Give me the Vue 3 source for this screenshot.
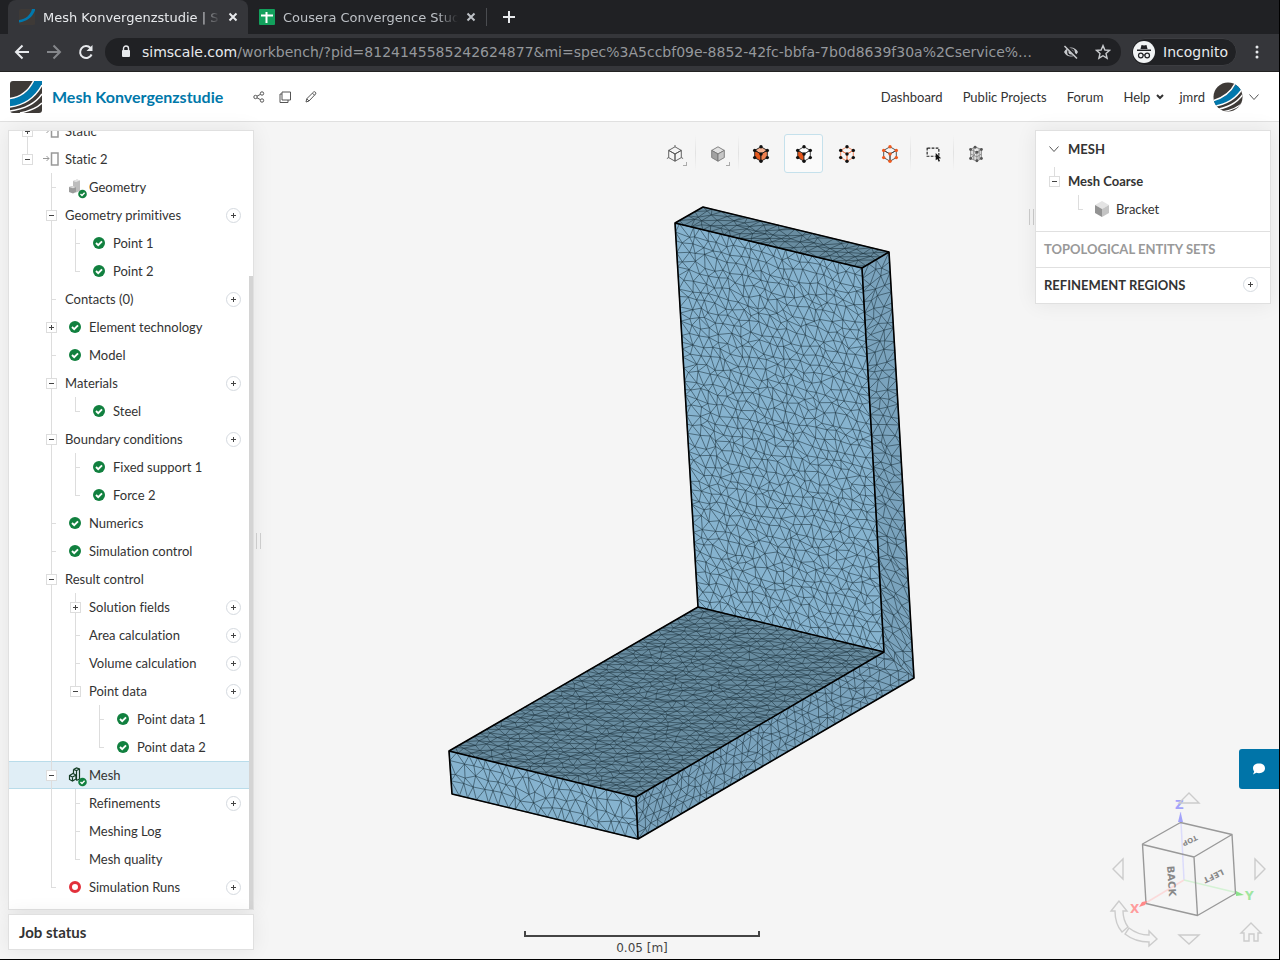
<script setup>
import { ref, computed } from 'vue';

const selected = ref('Mesh');
const tool = ref('faces');

// level: depth in the tree, box: expander sign, icon: status icon, add: has a plus button
const items = [
  { label: 'Static', level: 0, box: '+', icon: 'static' },
  { label: 'Static 2', level: 0, box: '-', icon: 'static' },
  { label: 'Geometry', level: 1, icon: 'geometry' },
  { label: 'Geometry primitives', level: 1, box: '-', add: true },
  { label: 'Point 1', level: 2, icon: 'ok' },
  { label: 'Point 2', level: 2, icon: 'ok' },
  { label: 'Contacts (0)', level: 1, add: true },
  { label: 'Element technology', level: 1, box: '+', icon: 'ok' },
  { label: 'Model', level: 1, icon: 'ok' },
  { label: 'Materials', level: 1, box: '-', add: true },
  { label: 'Steel', level: 2, icon: 'ok' },
  { label: 'Boundary conditions', level: 1, box: '-', add: true },
  { label: 'Fixed support 1', level: 2, icon: 'ok' },
  { label: 'Force 2', level: 2, icon: 'ok' },
  { label: 'Numerics', level: 1, icon: 'ok' },
  { label: 'Simulation control', level: 1, icon: 'ok' },
  { label: 'Result control', level: 1, box: '-' },
  { label: 'Solution fields', level: 2, box: '+', add: true },
  { label: 'Area calculation', level: 2, add: true },
  { label: 'Volume calculation', level: 2, add: true },
  { label: 'Point data', level: 2, box: '-', add: true },
  { label: 'Point data 1', level: 3, icon: 'ok' },
  { label: 'Point data 2', level: 3, icon: 'ok' },
  { label: 'Mesh', level: 1, box: '-', icon: 'mesh' },
  { label: 'Refinements', level: 2, add: true },
  { label: 'Meshing Log', level: 2 },
  { label: 'Mesh quality', level: 2 },
  { label: 'Simulation Runs', level: 1, icon: 'run', add: true }
];

// does another row of this level follow before the branch closes?
function continues(index, level) {
  for (let i = index + 1; i < items.length; i++) {
    if (items[i].level === level) return true;
    if (items[i].level < level) return false;
  }
  return false;
}

const rows = computed(() =>
  items.map((item, index) => {
    const guides = [];
    for (let l = 0; l < item.level; l++) {
      guides.push(continues(index, l) ? 'line' : '');
    }
    guides.push(continues(index, item.level) ? 'branch' : 'last');
    return { ...item, guides };
  })
);

const tools = [
  { id: 'wire', title: 'Projection', more: true },
  { id: 'solid', title: 'Render mode', more: true, split: true },
  { id: 'volumes', title: 'Select volumes', split: true },
  { id: 'faces', title: 'Select faces' },
  { id: 'edges', title: 'Select edges' },
  { id: 'nodes', title: 'Select nodes' },
  { id: 'box', title: 'Box selection', split: true },
  { id: 'clip', title: 'Mesh clip', split: true }
];

const cubeColors = {
  wire: { top: 'none', left: 'none', right: 'none', line: '#555', dot: '' },
  solid: { top: '#e2e2e2', left: '#a2a2a2', right: '#c6c6c6', line: '#777', dot: '' },
  volumes: { top: '#f6b292', left: '#e5571c', right: '#f08150', line: '#1a1a1a', dot: '#111' },
  faces: { top: '#fff', left: '#e5571c', right: '#fff', line: '#333', dot: '#111' },
  edges: { top: 'none', left: 'none', right: 'none', line: '#ef7d4f', dot: '#111' },
  nodes: { top: 'none', left: 'none', right: 'none', line: '#444', dot: '#f05a1e' }
};
const dots = [[10, 2], [17, 6], [17, 14], [10, 18], [3, 14], [3, 6], [10, 10]];

let seed = 7;
function random() {
  seed = (seed * 16807) % 2147483647;
  return seed / 2147483647;
}

function circumcircle(p, a, b, c) {
  const [ax, ay] = p[a];
  const bx = p[b][0] - ax;
  const by = p[b][1] - ay;
  const cx = p[c][0] - ax;
  const cy = p[c][1] - ay;
  const d = 2 * (bx * cy - by * cx) || 1e-9;
  const b2 = bx * bx + by * by;
  const c2 = cx * cx + cy * cy;
  const x = (cy * b2 - by * c2) / d;
  const y = (bx * c2 - cx * b2) / d;
  return { v: [a, b, c], x: x + ax, y: y + ay, r: x * x + y * y };
}

// Delaunay triangulation (Bowyer-Watson), returns unique edges
function triangulate(points) {
  const n = points.length;
  const p = [...points, [-900, -900], [1100, -900], [0, 1500]];
  let tris = [circumcircle(p, n, n + 1, n + 2)];
  for (let i = 0; i < n; i++) {
    const edges = new Map();
    const keep = [];
    for (const t of tris) {
      const dx = p[i][0] - t.x;
      const dy = p[i][1] - t.y;
      if (dx * dx + dy * dy >= t.r) {
        keep.push(t);
        continue;
      }
      for (let k = 0; k < 3; k++) {
        const a = Math.min(t.v[k], t.v[(k + 1) % 3]);
        const b = Math.max(t.v[k], t.v[(k + 1) % 3]);
        const key = a + '_' + b;
        if (edges.has(key)) edges.delete(key);
        else edges.set(key, [a, b]);
      }
    }
    tris = keep;
    for (const [a, b] of edges.values()) tris.push(circumcircle(p, a, b, i));
  }
  const result = new Map();
  for (const { v } of tris) {
    if (Math.max(...v) >= n) continue;
    for (let k = 0; k < 3; k++) {
      const a = Math.min(v[k], v[(k + 1) % 3]);
      const b = Math.max(v[k], v[(k + 1) % 3]);
      result.set(a + '_' + b, [a, b]);
    }
  }
  return [...result.values()];
}

// quad corners in order, divided in cols x rows elements
function meshPath([a, b, c, d], cols, rows) {
  const points = [];
  for (let j = 0; j <= rows; j++) {
    for (let i = 0; i <= cols; i++) {
      const edgeX = i === 0 || i === cols;
      const edgeY = j === 0 || j === rows;
      const shift = j % 2 ? 0.25 : -0.25;
      const x = edgeX ? i : i + shift + (random() - 0.5) * 0.56;
      const y = edgeY ? j : j + (random() - 0.5) * 0.64;
      points.push([x, y]);
    }
  }
  const screen = points.map(([x, y]) => {
    const u = x / cols;
    const v = y / rows;
    return [0, 1]
      .map((k) => (a[k] * (1 - u) + b[k] * u) * (1 - v) + (d[k] * (1 - u) + c[k] * u) * v)
      .map((n) => n.toFixed(1))
      .join(' ');
  });
  return triangulate(points).map(([s, e]) => `M${screen[s]}L${screen[e]}`).join('');
}

const faces = [
  { fill: '#86b3cf', quad: [[675, 223], [862, 268], [884, 652], [698, 607]], n: [20, 42] },
  { fill: '#688ca0', quad: [[675, 223], [703, 207], [889, 252], [862, 268]], n: [4, 20] },
  { fill: '#7aa3bd', quad: [[862, 268], [889, 252], [914, 678], [884, 652]], n: [3, 44] },
  { fill: '#7aa3bd', quad: [[636, 797], [884, 652], [914, 678], [638, 839]], n: [34, 5] },
  { fill: '#688ca0', quad: [[449, 751], [698, 607], [884, 652], [636, 797]], n: [38, 20] },
  { fill: '#86b3cf', quad: [[449, 751], [636, 797], [638, 839], [452, 794]], n: [19, 4] }
].map((f) => ({ fill: f.fill, points: f.quad.join(' '), path: meshPath(f.quad, ...f.n) }));
</script>

<template>
  <div class="window">
    <header class="browser">
      <div class="tabs">
        <div class="tab active">
          <svg class="favicon" viewBox="0 0 32 32">
            <rect width="32" height="32" rx="3" fill="#3e3a37" />
            <path d="M0 22C14 20 23 12 26 0h6v3C27 16 16 25 0 27z" fill="#0078ad" />
          </svg>
          <span class="tab-title">Mesh Konvergenzstudie | SimScale</span>
          <button class="tab-btn" aria-label="Close tab">
            <svg viewBox="0 0 10 10"><path d="M1.500 1.500l7 7M8.500 1.500l-7 7" /></svg>
          </button>
        </div>
        <div class="tab">
          <svg class="favicon" viewBox="0 0 16 16">
            <rect width="16" height="16" rx="1" fill="#12a05c" />
            <path d="M2 6.500h12M7.500 3v11" stroke="#fff" stroke-width="2" />
          </svg>
          <span class="tab-title">Cousera Convergence Study</span>
          <button class="tab-btn" aria-label="Close tab">
            <svg viewBox="0 0 10 10"><path d="M1.500 1.500l7 7M8.500 1.500l-7 7" /></svg>
          </button>
        </div>
        <button class="new-tab" aria-label="New tab">
          <svg viewBox="0 0 12 12"><path d="M6 0v12M0 6h12" /></svg>
        </button>
      </div>
      <div class="toolbar">
        <button class="nav-btn" aria-label="Back">
          <svg viewBox="0 0 16 16"><path d="M15 8H2M8.500 1.500L2 8l6.500 6.500" /></svg>
        </button>
        <button class="nav-btn dim" aria-label="Forward">
          <svg viewBox="0 0 16 16"><path d="M1 8h13M7.500 1.500L14 8l-6.500 6.500" /></svg>
        </button>
        <button class="nav-btn" aria-label="Reload">
          <svg viewBox="0 0 16 16">
            <path d="M13.600 10.500A6 6 0 1 1 12.500 4" />
            <path d="M14.500 1v6h-6z" fill="#e8eaed" stroke="none" />
          </svg>
        </button>
        <div class="address">
          <svg class="lock" viewBox="0 0 10 13">
            <rect x="1" y="5" width="8" height="7" rx="1" fill="#e8eaed" />
            <path d="M2.500 6V3.500a2.500 2.500 0 0 1 5 0V6" fill="none" stroke="#e8eaed" stroke-width="1.400" />
          </svg>
          <span class="url"><b>simscale.com</b>/workbench/?pid=8124145585242624877&amp;mi=spec%3A5ccbf09e-8852-42fc-bbfa-7b0d8639f30a%2Cservice%…</span>
          <button class="address-btn" aria-label="Cookies blocked">
            <svg viewBox="0 0 16 16">
              <path d="M1 8c3-6 11-6 14 0-3 6-11 6-14 0z" fill="#c8cacd" />
              <circle cx="8" cy="8" r="3.200" fill="#c8cacd" stroke="#202124" stroke-width="1.300" />
              <path d="M2 1l13 13" stroke="#202124" stroke-width="3" />
              <path d="M1.500 2l12.500 12.500" stroke="#c8cacd" stroke-width="1.500" />
            </svg>
          </button>
          <button class="address-btn" aria-label="Bookmark">
            <svg viewBox="0 0 16 16">
              <path d="M8 1.600l1.900 4.400 4.700.4-3.600 3.100 1.100 4.700L8 11.700l-4.100 2.500L5 9.500 1.400 6.400l4.700-.4z" fill="none" stroke="#c8cacd" stroke-width="1.400" />
            </svg>
          </button>
        </div>
        <div class="incognito">
          <svg viewBox="0 0 22 22">
            <circle cx="11" cy="11" r="11" fill="#f1f3f4" />
            <path d="M7.500 8l1-4 2.500.6 2.500-.6 1 4zM4 8.500h14v1.500H4z" fill="#202124" />
            <g fill="none" stroke="#202124" stroke-width="1.200">
              <circle cx="7.800" cy="14.500" r="2.300" />
              <circle cx="14.200" cy="14.500" r="2.300" />
              <path d="M10 14h2" />
            </g>
          </svg>
          Incognito
        </div>
        <button class="kebab" aria-label="Menu">
          <svg viewBox="0 0 4 16">
            <circle cx="2" cy="3" r="1.500" /><circle cx="2" cy="8" r="1.500" /><circle cx="2" cy="13" r="1.500" />
          </svg>
        </button>
      </div>
    </header>

    <div class="app-header">
      <svg class="logo" viewBox="0 0 32 32">
        <rect width="32" height="32" rx="3" fill="#3e3a37" />
        <path d="M0 18C12 16 20 9 24 0h8v3C26 16 15 24 0 26z" fill="#0078ad" />
        <path d="M0 17.500C11 16 19 9 23.500 0M0 26C15 24 26 15 32 4M0 30c15-2 26-8 32-17M10 32c10-2 17-5 22-10" fill="none" stroke="#fff" stroke-width="1.500" />
      </svg>
      <h1>Mesh Konvergenzstudie</h1>
      <div class="title-actions">
        <button aria-label="Share">
          <svg viewBox="0 0 12 12"><circle cx="2.500" cy="6" r="1.700" /><circle cx="9" cy="2.500" r="1.700" /><circle cx="9" cy="9.500" r="1.700" /><path d="M4 5.200l3.500-1.900M4 6.800l3.500 1.900" /></svg>
        </button>
        <button aria-label="Copy">
          <svg viewBox="0 0 12 12"><path d="M3 1h8.500v8H3zM3 3H1v8.500h8V9" /></svg>
        </button>
        <button aria-label="Edit">
          <svg viewBox="0 0 12 12"><path d="M1 11l.8-3.300L8.600 1q.9-.7 1.800.2t.2 1.800L4 10zM7.500 2.200l2 2M1.800 7.700L4 10" /></svg>
        </button>
      </div>
      <nav>
        <a href="#">Dashboard</a>
        <a href="#">Public Projects</a>
        <a href="#">Forum</a>
        <a href="#" class="help">Help
          <svg viewBox="0 0 8 6"><path d="M1 1l3 3 3-3" /></svg>
        </a>
      </nav>
      <button class="user">
        <span>jmrd</span>
        <svg class="avatar" viewBox="0 0 32 32">
          <clipPath id="round"><circle cx="16" cy="16" r="15.500" /></clipPath>
          <g clip-path="url(#round)">
            <rect width="32" height="32" fill="#3e3a37" />
            <path d="M0 20C12 17 20 11 24 2h8v3C26 17 15 23 0 27z" fill="#0078ad" />
            <path d="M0 20C11 17 19 11 24 1M0 26C15 24 26 16 32 6M0 30c15-2 26-8 32-17M10 32c10-2 17-5 22-10" fill="none" stroke="#fff" stroke-width="1.500" />
          </g>
        </svg>
        <svg class="caret" viewBox="0 0 10 6"><path d="M.5.5L5 5.500 9.500.5" /></svg>
      </button>
    </div>

    <main>
      <aside class="sidebar">
        <div class="tree-panel">
          <ul class="tree">
            <li v-for="row in rows" :key="row.label" :class="['row', { selected: selected === row.label }]" @click="selected = row.label">
              <span v-for="(g, i) in row.guides" :key="i" :class="['guide', g]">
                <button v-if="row.box && i === row.level" class="expander" :aria-label="'Toggle ' + row.label">
                  <svg viewBox="0 0 11 11"><path :d="row.box === '+' ? 'M3 5.500h5M5.500 3v5' : 'M3 5.500h5'" /></svg>
                </button>
              </span>
              <svg v-if="row.icon" class="icon" viewBox="0 0 20 20">
                <g v-if="row.icon === 'static'" fill="none" stroke="#999">
                  <path d="M2 9.500h6M5.500 7L8 9.500 5.500 12" />
                  <path d="M10.500 4h6.500v12h-6.500z" stroke-width="1.500" />
                </g>
                <g v-if="row.icon === 'geometry'">
                  <path d="M8 4l4-1.500 3 1V14l-4 1.500-3-1z" fill="#bdbdbd" />
                  <path d="M8 4l4-1.500 3 1L11 5z" fill="#e4e4e4" />
                  <path d="M4 10l4-1 3 1v5l-3 1.500-4-1.500z" fill="#9b9b9b" />
                  <path d="M4 10l4-1 3 1-3 1.200z" fill="#dcdcdc" />
                </g>
                <g v-if="row.icon === 'mesh'" fill="none" stroke="#143d25" stroke-width="1.200">
                  <path d="M8.500 4.500l3-1.500 3 1v10l-3 1.500M8.500 4.500l3 1 3-1.500M11.500 5.500v10M8.500 4.500v4" />
                  <path d="M4.500 10.500l3.500-2 3 1.500v4l-3.500 2-3-1.500zM4.500 10.500l3 1.500 3.500-2M7.500 12v4" />
                </g>
                <g v-if="row.icon === 'ok'">
                  <circle cx="10" cy="10" r="6" fill="#11803f" />
                  <path d="M7 10l2.200 2.200L13 8.300" fill="none" stroke="#fff" stroke-width="1.900" />
                </g>
                <g v-if="row.icon === 'geometry' || row.icon === 'mesh'">
                  <circle cx="17.500" cy="17" r="4.300" fill="#11803f" />
                  <path d="M15.500 17l1.500 1.500 2.600-2.700" fill="none" stroke="#fff" stroke-width="1.400" />
                </g>
                <circle v-if="row.icon === 'run'" cx="10" cy="10" r="4.500" fill="none" stroke="#e2303b" stroke-width="3" />
              </svg>
              <span class="label">{{ row.label }}</span>
              <button v-if="row.add" class="add" :aria-label="'Add to ' + row.label">
                <svg viewBox="0 0 15 15"><path d="M5 7.500h5M7.500 5v5" /></svg>
              </button>
            </li>
          </ul>
          <div class="scrollbar"><div class="thumb"></div></div>
        </div>
        <div class="job-status">Job status</div>
      </aside>
      <div class="handle"></div>

      <section class="viewer">
        <div class="view-tools">
          <button
            v-for="t in tools"
            :key="t.id"
            :class="['tool', { active: tool === t.id, split: t.split }]"
            :title="t.title"
            @click="tool = t.id"
          >
            <svg v-if="cubeColors[t.id]" viewBox="0 0 20 20">
              <g :stroke="cubeColors[t.id].line" stroke-linejoin="round">
                <path d="M10 2l7 4-7 4-7-4z" :fill="cubeColors[t.id].top" />
                <path d="M3 6l7 4v8l-7-4z" :fill="cubeColors[t.id].left" />
                <path d="M17 6l-7 4v8l7-4z" :fill="cubeColors[t.id].right" />
                <path v-if="t.id === 'wire'" d="M10 0v2M3 14l-2 1M17 14l2 1" />
              </g>
              <template v-if="cubeColors[t.id].dot">
                <circle v-for="(d, i) in dots" :key="i" :cx="d[0]" :cy="d[1]" r="1.900" :fill="cubeColors[t.id].dot" />
              </template>
            </svg>
            <svg v-else-if="t.id === 'box'" viewBox="0 0 20 20">
              <path d="M4 3.500H16.500V12M3.500 3v9.500H13" fill="none" stroke="#222" stroke-width="1.300" stroke-dasharray="3 1.500" />
              <path d="M13 9v8l2-1.500 1.300 3 1.500-.7-1.400-2.800 2.600-.3z" fill="#111" />
            </svg>
            <svg v-else viewBox="0 0 20 20">
              <path d="M4 5l5-3 7 3v10l-5 3-7-3zM4 5l7 3 5-3M11 8v10M4 10l7 3 5-3M7.500 3.500v13M13.500 4v12M4 15l7-7" fill="#ddd" stroke="#888" />
              <g fill="#555">
                <circle cx="4" cy="5" r="1.600" /><circle cx="9" cy="2.500" r="1.600" /><circle cx="16" cy="5" r="1.600" />
                <circle cx="4" cy="15" r="1.600" /><circle cx="11" cy="17.500" r="1.600" /><circle cx="16" cy="15" r="1.600" /><circle cx="11" cy="8" r="1.600" />
              </g>
            </svg>
            <span v-if="t.more" class="more"></span>
          </button>
        </div>
        <svg class="model" viewBox="264 181 764 745">
          <g v-for="(f, i) in faces" :key="i">
            <polygon :points="f.points" :fill="f.fill" />
            <path :d="f.path" class="mesh-lines" />
          </g>
          <path class="outline" d="M675 223L703 207 889 252 914 678 638 839 452 794 449 751 698 607zM675 223L862 268 889 252M862 268L884 652 698 607M884 652L636 797 449 751M636 797L638 839" />
        </svg>
        <div class="scale">
          <div class="bar"></div>
          <span>0.05 [m]</span>
        </div>
      </section>

      <aside class="right">
        <div class="mesh-row">
          <div class="handle"></div>
          <div class="mesh-panel">
            <div class="mesh-section">
              <button class="section-title">
                <svg viewBox="0 0 10 6"><path d="M.5.5L5 5.500 9.500.5" /></svg>
                MESH
              </button>
              <div class="row">
                <span class="guide last">
                  <button class="expander" aria-label="Toggle Mesh Coarse">
                    <svg viewBox="0 0 11 11"><path d="M3 5.500h5" /></svg>
                  </button>
                </span>
                <span class="label bold">Mesh Coarse</span>
              </div>
              <div class="row">
                <span class="guide"></span>
                <span class="guide last"></span>
                <svg class="icon" viewBox="0 0 20 20">
                  <path d="M10 2l7 4-7 4-7-4z" fill="#e4e4e4" />
                  <path d="M3 6l7 4v8l-7-4z" fill="#939393" />
                  <path d="M17 6l-7 4v8l7-4z" fill="#c4c4c4" />
                </svg>
                <span class="label">Bracket</span>
              </div>
            </div>
            <div class="panel-line muted">TOPOLOGICAL ENTITY SETS</div>
            <div class="panel-line">
              REFINEMENT REGIONS
              <button class="add" aria-label="Add refinement region">
                <svg viewBox="0 0 15 15"><path d="M5 7.500h5M7.500 5v5" /></svg>
              </button>
            </div>
          </div>
        </div>

        <button class="chat" aria-label="Chat">
          <svg viewBox="0 0 14 14"><path d="M7 1.500c3.800 0 6 2 6 4.800s-2.200 4.900-6 4.900c-1 0-2-.2-2.700-.5L1 12.500l1.200-3C1.400 8.600 1 7.500 1 6.300 1 3.500 3.200 1.500 7 1.500z" fill="#fff" /></svg>
        </button>

        <svg class="cube" viewBox="1105 789 165 161">
          <path d="M1184 880L1180.500 812" stroke="#dcdcfb" stroke-width="1.500" />
          <path d="M1184 880l-40 24" stroke="#fbdada" stroke-width="1.500" />
          <path d="M1184 880l54 13" stroke="#d5f2d5" stroke-width="1.500" />
          <g fill="none" stroke="#999" stroke-width="1.400" stroke-linejoin="round">
            <path d="M1180.500 822.500l51.500 12 3.500 59-38 22-51.500-12-3.500-59.500zM1142.500 844.500l51.500 12.500 38-22.500M1194 857l3.500 58.500" />
          </g>
          <path d="M1178 822l2.500-10 2.500 10z" fill="#a3a3fa" />
          <path d="M1139 907l3-5 5-1-2 4z" fill="#f88" />
          <path d="M1244 895l-8-4v5z" fill="#8be28b" />
          <g class="axis">
            <text x="1175" y="809" fill="#a3a3fa">Z</text>
            <text x="1130" y="913" fill="#ff9c9c">X</text>
            <text x="1245" y="900" fill="#a0e6a0">Y</text>
          </g>
          <g class="side">
            <text transform="translate(1167 866) rotate(86)">BACK</text>
            <text class="left" transform="translate(1222 869) rotate(154)">LEFT</text>
            <text class="top" transform="translate(1196 835) rotate(154)">TOP</text>
          </g>
          <g fill="none" stroke="#ccc" stroke-width="1.400">
            <path d="M1179 803h20l-10-10zM1179 935h20l-10 9zM1123 859v20l-10-10zM1255 859v20l10-10z" />
            <path d="M1119 901l-8 10h4q0 13 7 21l6-5q-5-7-5-16h4z" />
            <path d="M1157 939l-8-8v4q-11 0-20-7l-4 6q10 8 24 8v4z" />
            <path d="M1241 933l10-10 10 10h-3v8h-4v-7h-5v7h-5v-8z" />
          </g>
        </svg>
      </aside>
    </main>
  </div>
</template>

<style>
body {
  background: #f5f5f5;
}
</style>

<style scoped>
.window {
  display: flex;
  flex-direction: column;
  box-sizing: border-box;
  height: 100vh;
  border-right: 1px solid #000;
  border-bottom: 1px solid #000;
  background: #f5f5f5;
  color: #333;
  font-family: Lato, "Liberation Sans", sans-serif;
  font-size: 13px;
  font-variant-ligatures: none;
}

button {
  padding: 0;
  border: none;
  background: none;
  color: inherit;
  font: inherit;
  cursor: pointer;
}

svg {
  display: block;
  flex: none;
}

/* Browser bar */
.browser {
  font-family: "DejaVu Sans", sans-serif;
  color: #e8eaed;
  background: #202124;
}

.tabs {
  display: flex;
  height: 34px;
  padding-left: 8px;
}

.tab {
  display: flex;
  align-items: center;
  box-sizing: border-box;
  width: 238px;
  padding: 0 10px 0 11px;
  color: #bdc1c6;
}

.tab.active {
  width: 240px;
  border-radius: 8px 8px 0 0;
  background: #35363a;
  color: #e8eaed;
}

.favicon {
  width: 16px;
  height: 16px;
  margin-right: 8px;
}

.tab-title {
  flex: 1;
  min-width: 0;
  overflow: hidden;
  white-space: nowrap;
  font-size: 13px;
  mask-image: linear-gradient(to right, #000 88%, transparent);
}

.tab-btn svg {
  width: 10px;
  height: 10px;
  margin-left: 8px;
  stroke: currentColor;
  stroke-width: 2;
}

.new-tab {
  display: flex;
  align-items: center;
  height: 18px;
  margin-top: 8px;
  padding-left: 16px;
  border-left: 1px solid #4a4c50;
}

.new-tab svg {
  width: 12px;
  height: 12px;
  stroke: #e8eaed;
  stroke-width: 2;
}

.toolbar {
  display: flex;
  align-items: center;
  height: 38px;
  box-sizing: border-box;
  padding: 0 20px 2px 14px;
  border-bottom: 1px solid #222;
  background: #35363a;
}

.nav-btn {
  margin-right: 16px;
}

.nav-btn svg {
  width: 16px;
  height: 16px;
  fill: none;
  stroke: #e8eaed;
  stroke-width: 2;
}

.nav-btn.dim svg {
  stroke: #85878b;
}

.address {
  display: flex;
  flex: 1;
  align-items: center;
  min-width: 0;
  height: 28px;
  margin-left: -5px;
  padding: 0 10px 0 16px;
  border-radius: 14px;
  background: #202124;
}

.lock {
  width: 10px;
  height: 13px;
  margin-right: 11px;
}

.url {
  flex: 1;
  min-width: 0;
  overflow: hidden;
  white-space: nowrap;
  color: #95989c;
  font-size: 14px;
}

.url b {
  color: #e8eaed;
  font-weight: normal;
}

.address-btn {
  margin-left: 16px;
}

.address-btn svg {
  width: 16px;
  height: 16px;
}

.incognito {
  display: flex;
  align-items: center;
  gap: 8px;
  height: 26px;
  margin: 0 18px 0 10px;
  padding: 0 8px 0 1px;
  border: 1px solid #3c3d41;
  border-radius: 14px;
  background: #202124;
  font-size: 14px;
}

.incognito svg {
  width: 22px;
  height: 22px;
}

.kebab svg {
  width: 4px;
  height: 16px;
  fill: #e8eaed;
}

/* Application header */
.app-header {
  display: flex;
  align-items: center;
  height: 49px;
  padding: 0 20px 0 10px;
  border-bottom: 1px solid #e0e0e0;
  background: #fff;
}

.logo {
  width: 32px;
  height: 32px;
}

h1 {
  margin: 0 30px 0 10px;
  color: #0078aa;
  font-size: 16px;
  line-height: 20px;
}

.title-actions {
  display: flex;
  gap: 14px;
}

.title-actions svg {
  width: 12px;
  height: 12px;
  fill: none;
  stroke: #555;
}

nav {
  display: flex;
  gap: 20px;
  margin-left: auto;
}

nav a {
  color: #333;
  text-decoration: none;
}

.help {
  display: flex;
  align-items: center;
  gap: 6px;
}

.help svg {
  width: 8px;
  height: 6px;
  fill: none;
  stroke: #333;
  stroke-width: 2;
}

.user {
  display: flex;
  align-items: center;
  margin-left: 15px;
}

.avatar {
  width: 30px;
  height: 30px;
  margin: 0 6px 0 8px;
}

.caret,
.section-title svg {
  width: 10px;
  height: 6px;
  fill: none;
  stroke: #555;
}

/* Main area */
main {
  display: flex;
  flex: 1;
  min-height: 0;
}

.sidebar {
  display: flex;
  flex-direction: column;
  gap: 4px;
  width: 246px;
  padding: 8px 0 9px 8px;
}

.tree-panel,
.job-status,
.mesh-panel {
  box-sizing: border-box;
  border: 1px solid #e0e0e0;
  background: #fff;
  box-shadow: 0 0 20px rgba(0, 0, 0, 0.07);
}

.tree-panel {
  display: flex;
  flex: 1;
  min-height: 0;
  overflow: hidden;
}

/* scrolled to the end */
.tree {
  display: flex;
  flex: 1;
  flex-direction: column;
  justify-content: flex-end;
  margin: 0;
  padding: 0 0 8px;
  list-style: none;
}

.row {
  display: flex;
  flex: none;
  align-items: center;
  box-sizing: border-box;
  height: 28px;
  padding: 0 8px 0 6px;
}

.row.selected {
  background: #e0eef6;
  box-shadow: inset 0 1px #b9dcea, inset 0 -1px #b9dcea;
}

.guide {
  display: flex;
  align-items: center;
  justify-content: center;
  width: 24px;
  height: 28px;
  background-repeat: no-repeat;
}

.guide.line {
  background-image: linear-gradient(#ddd, #ddd);
  background-position: 12px 0;
  background-size: 1px 100%;
}

.guide.branch,
.guide.last {
  background-image: linear-gradient(#ddd, #ddd), linear-gradient(#ddd, #ddd);
  background-position: 12px 0, 12px 14px;
  background-size: 1px 100%, 5px 1px;
}

.guide.last {
  background-size: 1px 14px, 5px 1px;
}

.expander svg {
  box-sizing: border-box;
  width: 11px;
  height: 11px;
  background: #fff;
  outline: 1px solid #ddd;
  outline-offset: -1px;
  stroke: #444;
}

.icon {
  width: 20px;
  height: 20px;
  margin: 0 2px;
  overflow: visible;
}

.label {
  flex: 1;
  padding-left: 2px;
  line-height: 20px;
}

.label.bold {
  font-weight: bold;
}

.add svg {
  width: 15px;
  height: 15px;
  box-sizing: border-box;
  border-radius: 50%;
  outline: 1px solid #d5dae0;
  outline-offset: -1px;
  stroke: #444;
}

.scrollbar {
  display: flex;
  flex-direction: column;
  width: 4px;
  padding-top: 145px;
}

.thumb {
  flex: 1;
  background: #d4d4d4;
}

.job-status {
  height: 36px;
  padding-left: 10px;
  font-size: 15px;
  font-weight: bold;
  line-height: 34px;
}

.handle {
  align-self: center;
  box-sizing: border-box;
  width: 5px;
  height: 16px;
  margin: 0 3px 0 2px;
  border: solid #ccc;
  border-width: 0 1px;
}

/* 3D viewer */
.viewer {
  display: flex;
  flex: 1;
  flex-direction: column;
  min-width: 0;
}

.view-tools {
  display: flex;
  justify-content: flex-end;
  gap: 4px;
  padding: 12px 33px 8px 0;
}

.tool {
  position: relative;
  display: flex;
  align-items: center;
  justify-content: center;
  box-sizing: border-box;
  width: 39px;
  height: 39px;
  border: 1px solid transparent;
  border-radius: 3px;
}

.tool.active {
  border-color: #c5e1ec;
  background: #fafafa;
}

.tool svg {
  width: 18px;
  height: 18px;
}

.tool.split::before {
  content: "";
  position: absolute;
  top: 0;
  left: -4px;
  width: 1px;
  height: 36px;
  background: linear-gradient(transparent, #e2e2e2, transparent);
}

.more {
  position: absolute;
  right: 6px;
  bottom: 6px;
  width: 3px;
  height: 3px;
  border: solid #aaa;
  border-width: 0 1px 1px 0;
}

.model {
  flex: 1;
  width: 100%;
  min-height: 0;
}

.mesh-lines {
  fill: none;
  stroke: #1c303c;
  stroke-opacity: 0.62;
  stroke-width: 0.9;
}

.outline {
  fill: none;
  stroke: #000;
  stroke-width: 1.6;
  stroke-linejoin: round;
}

.scale {
  display: flex;
  flex-direction: column;
  align-items: center;
  padding: 5px 8px 0 0;
  color: #444;
  font: 12px/22px "DejaVu Sans", sans-serif;
}

.bar {
  box-sizing: border-box;
  width: 236px;
  height: 6px;
  border: 2px solid #444;
  border-top: none;
}

/* Right column */
.right {
  display: flex;
  flex-direction: column;
  align-items: flex-end;
  width: 251px;
  padding-top: 8px;
}

.mesh-row {
  display: flex;
  align-self: stretch;
  padding-right: 8px;
}

.mesh-row .handle {
  margin: 0 1px;
}

.mesh-panel {
  flex: 1;
}

.mesh-section {
  padding-bottom: 8px;
}

.mesh-section .row {
  padding-left: 6px;
}

.section-title {
  display: flex;
  align-items: center;
  gap: 9px;
  height: 36px;
  padding-left: 13px;
  font-weight: bold;
}

.panel-line {
  display: flex;
  align-items: center;
  justify-content: space-between;
  box-sizing: border-box;
  height: 36px;
  padding: 0 12px 2px 8px;
  border-top: 1px solid #e0e0e0;
  font-weight: bold;
}

.muted {
  color: #999;
}

.chat {
  display: flex;
  align-items: center;
  justify-content: center;
  width: 40px;
  height: 40px;
  margin-top: auto;
  border-radius: 3px 0 0 3px;
  background: #0074a8;
}

.chat svg {
  width: 14px;
  height: 14px;
}

.cube {
  width: 165px;
  height: 161px;
  margin: 0 9px 9px 0;
  overflow: visible;
}

.axis {
  font: bold 12px "DejaVu Sans", sans-serif;
}

.side {
  fill: #888;
  font: bold 10px "DejaVu Sans", sans-serif;
}

.left {
  font-size: 8px;
}

.top {
  font-size: 7px;
}
</style>
